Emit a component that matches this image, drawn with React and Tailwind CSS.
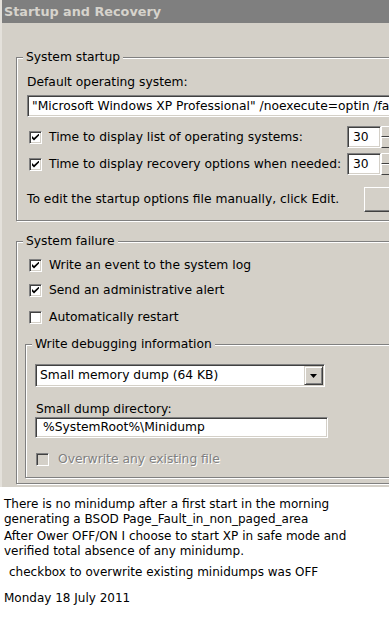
import React from "react";

const face = "font-['DejaVu_Sans',sans-serif]";

function Check({ on, disabled }) {
  return (
    <div className={`w-[13px] h-[13px] shrink-0 border border-t-[#808080] border-l-[#808080] border-r-white border-b-white shadow-[inset_1px_1px_0_#404040,inset_-1px_-1px_0_#d4d0c8] flex items-center justify-center ${disabled ? "bg-[#d4d0c8]" : "bg-white"}`}>
      {on && (
        <svg width="7" height="7" viewBox="0 0 7 7">
          <path d="M0 2 L0 4.5 L2 6.5 L7 1.5 L7 -0.5 L2 4 Z" fill="#000" />
        </svg>
      )}
    </div>
  );
}

function Sunken({ className, children }) {
  return (
    <div className={`border border-t-[#808080] border-l-[#808080] border-r-white border-b-white shadow-[inset_1px_1px_0_#404040,inset_-1px_-1px_0_#d4d0c8] bg-white flex items-center overflow-hidden ${className}`}>
      {children}
    </div>
  );
}

function Spin() {
  return (
    <div className="flex h-[22px] shrink-0">
      <Sunken className="w-[34px] h-[22px] pl-[5px]">30</Sunken>
      <div className="flex flex-col w-[16px]">
        <div className="h-[11px] bg-[#d4d0c8] border border-t-white border-l-white border-r-[#404040] border-b-[#404040]" />
        <div className="h-[11px] bg-[#d4d0c8] border border-t-white border-l-white border-r-[#404040] border-b-[#404040]" />
      </div>
    </div>
  );
}

function Group({ label, className, children }) {
  return (
    <div className={`border border-[#808080] shadow-[inset_1px_1px_0_#fff,1px_1px_0_#fff] ${className}`}>
      <div className="-mt-[8px] ml-[6px] px-[3px] w-fit bg-[#d4d0c8] leading-[14px]">{label}</div>
      {children}
    </div>
  );
}

export default function App() {
  return (
    <div className="w-[389px] h-[640px] bg-white overflow-hidden">
      <div className={`h-[487px] bg-[#d4d0c8] overflow-hidden border-l-2 border-[#e4e1db] text-[12.3px] text-black whitespace-nowrap ${face}`}>
        <div className="h-[23px] -ml-[2px] bg-[#7f7f7f] pl-[4px] flex items-center font-bold text-[12.8px] text-[#d6d3cc]">
          Startup and Recovery
        </div>

        <div className="ml-[14px]">
          <Group label="System startup" className="mt-[34px] w-[420px] pb-[8px]">
            <div className="ml-[10px] mt-[11px] leading-[14px]">Default operating system:</div>
            <Sunken className="ml-[10px] mt-[6px] w-[400px] h-[22px] pl-[4px]">
              "Microsoft Windows XP Professional" /noexecute=optin /fa
            </Sunken>
            <div className="ml-[12px] mt-[9px] flex items-center">
              <Check on />
              <span className="ml-[7px] w-[298px] shrink-0">Time to display list of operating systems:</span>
              <Spin />
            </div>
            <div className="ml-[12px] mt-[5px] flex items-center">
              <Check on />
              <span className="ml-[7px] w-[298px] shrink-0">Time to display recovery options when needed:</span>
              <Spin />
            </div>
            <div className="ml-[10px] mt-[12px] flex items-center">
              <span className="w-[337px] shrink-0">To edit the startup options file manually, click Edit.</span>
              <div className="w-[75px] h-[25px] shrink-0 bg-[#d4d0c8] border border-t-white border-l-white border-r-[#404040] border-b-[#404040] shadow-[inset_-1px_-1px_0_#808080]" />
            </div>
          </Group>

          <Group label="System failure" className="mt-[20px] w-[420px] pb-[5px]">
            <div className="ml-[12px] mt-[9px] flex items-center h-[16px]">
              <Check on />
              <span className="ml-[7px]">Write an event to the system log</span>
            </div>
            <div className="ml-[12px] mt-[9px] flex items-center h-[16px]">
              <Check on />
              <span className="ml-[7px]">Send an administrative alert</span>
            </div>
            <div className="ml-[12px] mt-[11px] flex items-center h-[16px]">
              <Check />
              <span className="ml-[7px]">Automatically restart</span>
            </div>

            <Group label="Write debugging information" className="ml-[8px] mt-[19px] w-[400px] pb-[10px]">
              <Sunken className="ml-[9px] mt-[13px] w-[290px] h-[23px] pl-[4px] justify-between">
                <span>Small memory dump (64 KB)</span>
                <div className="w-[19px] h-[19px] mr-[1px] bg-[#d4d0c8] border border-t-[#d4d0c8] border-l-[#d4d0c8] border-r-[#404040] border-b-[#404040] shadow-[inset_1px_1px_0_#fff,inset_-1px_-1px_0_#808080] flex items-center justify-center">
                  <svg width="7" height="4" viewBox="0 0 7 4">
                    <path d="M0 0 H7 L3.5 4 Z" fill="#000" />
                  </svg>
                </div>
              </Sunken>
              <div className="ml-[10px] mt-[15px] leading-[14px]">Small dump directory:</div>
              <Sunken className="ml-[9px] mt-[1px] w-[293px] h-[21px] pl-[7px]">%SystemRoot%\Minidump</Sunken>
              <div className="ml-[10px] mt-[13px] flex items-center h-[16px]">
                <Check disabled />
                <span className="ml-[9px] text-[#808080] [text-shadow:1px_1px_0_#fff]">Overwrite any existing file</span>
              </div>
            </Group>
          </Group>
        </div>
      </div>

      <div className="pt-[10px] pl-[4px] text-[12px] leading-[15px] text-black font-['DejaVu_Sans',sans-serif]">
        <p>There is no minidump after a first start in the morning<br />generating a BSOD Page_Fault_in_non_paged_area</p>
        <p className="mt-[2px]">After Ower OFF/ON I choose to start XP in safe mode and<br />verified total absence of any minidump.</p>
        <p className="mt-[6px] pl-[5px]">checkbox to overwrite existing minidumps was OFF</p>
        <p className="mt-[11px]">Monday 18 July 2011</p>
      </div>
    </div>
  );
}
